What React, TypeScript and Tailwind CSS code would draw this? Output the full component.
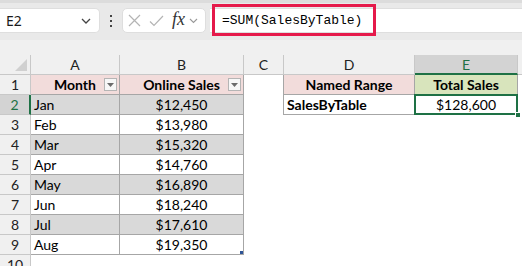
import React from "react";

const rows: [string, string][] = [
  ["Jan", "$12,450"],
  ["Feb", "$13,980"],
  ["Mar", "$15,320"],
  ["Apr", "$14,760"],
  ["May", "$16,890"],
  ["Jun", "$18,240"],
  ["Jul", "$17,610"],
  ["Aug", "$19,350"],
];

const cellFont = { fontFamily: "Lato, 'Noto Sans', sans-serif" };

function FilterBtn() {
  return (
    <div className="absolute right-[2px] top-[3px] w-[13px] h-[13px] border border-[#b5b5b5] bg-[#f7f7f7] flex items-center justify-center">
      <svg width="7" height="4" viewBox="0 0 7 4">
        <path d="M0 0 L7 0 L3.5 4 Z" fill="#6b6b6b" />
      </svg>
    </div>
  );
}

export default function App() {
  return (
    <div className="w-[522px] h-[266px] overflow-hidden bg-white relative" style={cellFont}>
      {/* Toolbar */}
      <div className="h-[40px] bg-[#e9e9e9] relative">
        <div className="h-[3px] bg-[#dcdcdc]" />
        <div className="flex items-start pt-[5px]">
          <div
            className="w-[100px] h-[25px] bg-white rounded-r-[5px] border border-l-0 border-[#dedede] flex items-center justify-between pl-[6px] pr-[8px]"
            style={{ fontFamily: "'Noto Sans', sans-serif" }}
          >
            <span className="text-[14px] text-[#1a1a1a] leading-none">E2</span>
            <svg width="10" height="6" viewBox="0 0 10 6">
              <path d="M1 1 L5 5 L9 1" stroke="#444" strokeWidth="1.3" fill="none" />
            </svg>
          </div>
          <div className="w-[22px] h-[25px] flex flex-col items-center justify-center gap-[3px]">
            <div className="w-[2px] h-[2px] bg-[#444]" />
            <div className="w-[2px] h-[2px] bg-[#444]" />
            <div className="w-[2px] h-[2px] bg-[#444]" />
          </div>
          <div className="w-[84px] h-[25px] bg-white rounded-[5px] border border-[#dedede] flex items-center pl-[5px] gap-[8px]">
            <svg width="13" height="13" viewBox="0 0 13 13">
              <path d="M1 1 L12 12 M12 1 L1 12" stroke="#b4b4b4" strokeWidth="1.2" />
            </svg>
            <svg width="15" height="12" viewBox="0 0 15 12">
              <path d="M1 6.5 L5 10.5 L14 1" stroke="#b4b4b4" strokeWidth="1.2" fill="none" />
            </svg>
            <span
              className="text-[18px] italic text-[#333] leading-none -mt-[3px]"
              style={{ fontFamily: "'Liberation Serif', serif" }}
            >
              fx
            </span>
            <svg width="9" height="6" viewBox="0 0 9 6" className="-ml-[4px]">
              <path d="M1 1 L4.5 4.5 L8 1" stroke="#999" strokeWidth="1.1" fill="none" />
            </svg>
          </div>
          <div className="flex-1 ml-[4px] h-[25px] bg-white border-y border-[#dedede] flex items-center pl-[12px]">
            <span
              className="text-[13px] text-black leading-none"
              style={{ fontFamily: "'Liberation Mono', monospace" }}
            >
              =SUM(SalesByTable)
            </span>
          </div>
        </div>
        <div className="absolute left-[212px] top-[4px] w-[164px] h-[32px] border-[3px] border-[#e5194a]" />
      </div>
      <div className="h-[15px] bg-[#f0f0f0]" />

      {/* Grid */}
      <div className="grid grid-cols-[31px_89px_124px_40px_131px_103px_1fr] auto-rows-[20px] text-[14px] text-black">
        {/* column headers */}
        <div className="bg-[#f0f0f0] border-r border-b border-[#c8c8c8] relative">
          <svg className="absolute right-[3px] bottom-[3px]" width="12" height="12" viewBox="0 0 12 12">
            <path d="M12 0 L12 12 L0 12 Z" fill="#d0d0d0" />
          </svg>
        </div>
        {["A", "B", "C", "D"].map((c) => (
          <div key={c} className="bg-[#f0f0f0] border-r border-b border-[#c8c8c8] flex items-center justify-center text-[#222]">
            {c}
          </div>
        ))}
        <div className="bg-[#d3d3d3] border-r border-[#c8c8c8] border-b-2 border-b-[#1e7145] flex items-center justify-center text-[#1e7145]">
          E
        </div>
        <div className="bg-[#f0f0f0] border-b border-[#c8c8c8]" />

        {/* Row 1 */}
        <div className="bg-[#f0f0f0] border-r border-b border-[#c8c8c8] flex items-center justify-center text-[#222]">1</div>
        <div className="bg-[#f2dcdb] border-r border-b border-[#a6a6a6] relative flex items-center justify-center font-bold">
          Month
          <FilterBtn />
        </div>
        <div className="bg-[#f2dcdb] border-r border-b border-[#a6a6a6] relative flex items-center justify-center font-bold">
          Online Sales
          <FilterBtn />
        </div>
        <div className="border-r border-[#a6a6a6]" />
        <div className="bg-[#f2dcdb] border-r border-b border-[#a6a6a6] flex items-center justify-center font-bold">Named Range</div>
        <div className="bg-[#d8e4bc] border-r border-b border-[#a6a6a6] flex items-center justify-center font-bold">Total Sales</div>
        <div />

        {/* Data rows */}
        {rows.map(([m, v], i) => {
          const n = i + 2;
          const band = i % 2 === 0 ? "bg-[#d9d9d9]" : "bg-white";
          return (
            <React.Fragment key={m}>
              {n === 2 ? (
                <div className="bg-[#d3d3d3] border-r-2 border-r-[#1e7145] border-b border-b-[#c8c8c8] flex items-center justify-center text-[#1e7145]">
                  {n}
                </div>
              ) : (
                <div className="bg-[#f0f0f0] border-r border-b border-[#c8c8c8] flex items-center justify-center text-[#222]">{n}</div>
              )}
              <div className={`${band} border-r border-b border-[#a6a6a6] flex items-center pl-[3px]`}>{m}</div>
              <div className={`${band} border-r border-b border-[#a6a6a6] flex items-center justify-center relative`}>
                {v}
                {n === 9 && <div className="absolute right-0 bottom-0 w-[3px] h-[3px] bg-[#2f5597]" />}
              </div>
              {n === 2 ? (
                <>
                  <div className="border-r border-[#a6a6a6]" />
                  <div className="border-r border-b border-[#a6a6a6] flex items-center pl-[3px] font-bold">SalesByTable</div>
                  <div className="border-r border-b border-[#a6a6a6] flex items-center justify-center relative">
                    $128,600
                    <div className="absolute -left-[1px] -top-[1px] -right-[1px] -bottom-[1px] border-2 border-[#1e7145]" />
                    <div className="absolute -right-[4px] -bottom-[4px] w-[6px] h-[6px] bg-[#1e7145] border border-white" />
                  </div>
                  <div />
                </>
              ) : (
                <>
                  <div />
                  <div />
                  <div />
                  <div />
                </>
              )}
            </React.Fragment>
          );
        })}

        {/* Row 10 */}
        <div className="bg-[#f0f0f0] border-r border-b border-[#c8c8c8] flex items-center justify-center text-[#222]">10</div>
        <div />
        <div />
        <div />
        <div />
        <div />
        <div />
      </div>
    </div>
  );
}
